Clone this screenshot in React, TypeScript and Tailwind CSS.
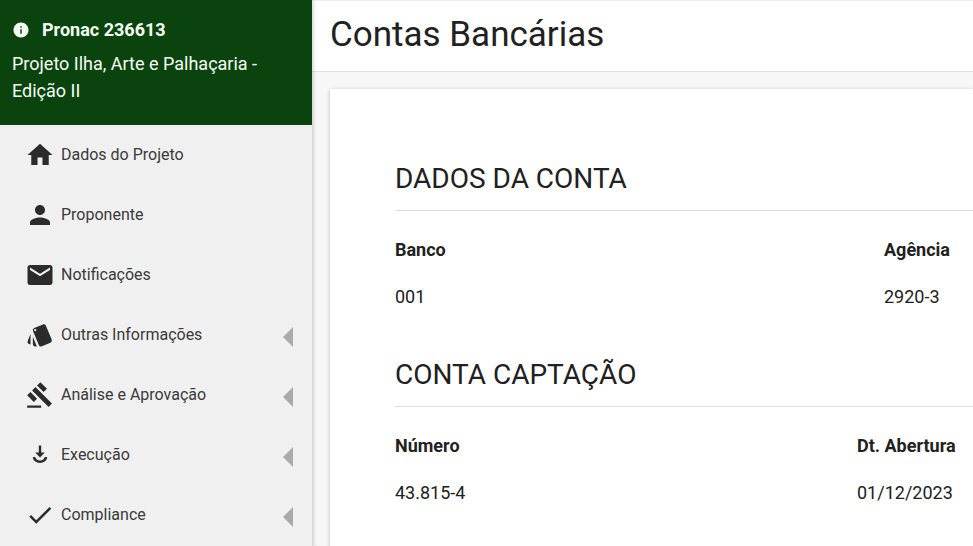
import type { ReactNode } from 'react';
import { MdCheck, MdEmail, MdGavel, MdHome, MdInfo, MdPerson, MdStyle } from 'react-icons/md';

const ExecutionIcon = () => (
  <svg viewBox="0 0 30 30" className="h-[30px] w-[30px]" fill="none" aria-hidden="true">
    <path d="M15 5.5V14" stroke="currentColor" strokeWidth="2.4" />
    <path d="M10.3 12.4h9.4L15 17.6z" fill="currentColor" />
    <path d="M8.8 17.2a6.5 6.5 0 0 0 12.4 0" stroke="currentColor" strokeWidth="2.6" />
  </svg>
);

const Arrow = () => (
  <svg viewBox="0 0 10 20" className="mt-1 h-5 w-[10px] text-[#aaaaaa]" aria-hidden="true">
    <path d="M10 0v20L0 10z" fill="currentColor" />
  </svg>
);

type MenuItem = { label: string; icon: ReactNode; expandable?: boolean };

const menuItems: MenuItem[] = [
  { label: 'Dados do Projeto', icon: <MdHome size={30} /> },
  { label: 'Proponente', icon: <MdPerson size={30} /> },
  { label: 'Notificações', icon: <MdEmail size={30} /> },
  { label: 'Outras Informações', icon: <MdStyle size={28} />, expandable: true },
  { label: 'Análise e Aprovação', icon: <MdGavel size={28} />, expandable: true },
  { label: 'Execução', icon: <ExecutionIcon />, expandable: true },
  { label: 'Compliance', icon: <MdCheck size={30} />, expandable: true },
];

const rowClass = 'flex h-[60px] w-full items-center pl-[25px] pr-[19px] text-left text-[#2b2b2b]';

const ItemContent = ({ item }: { item: MenuItem }) => (
  <>
    <span className="flex w-[30px] justify-center">{item.icon}</span>
    <span className="grow pl-[6px] text-base text-[#3a3a3a]">{item.label}</span>
    {item.expandable && <Arrow />}
  </>
);

const Sidebar = () => (
  <aside className="z-10 w-[312px] shrink-0 bg-[#f0f0f0] shadow-[0_0_5px_rgba(0,0,0,0.3)]">
    <div className="h-[125px] bg-[#0b430f] px-3 pt-4 text-lg leading-[27px] text-[#f3fff3]">
      <div className="flex items-center pb-[7px]">
        <MdInfo size={18} />
        <strong className="pl-3 font-bold">Pronac 236613</strong>
      </div>
      <p>Projeto Ilha, Arte e Palhaçaria - Edição II</p>
    </div>
    <nav>
      <ul>
        {menuItems.map((item) => (
          <li key={item.label}>
            {item.expandable ? (
              <button type="button" className={rowClass}>
                <ItemContent item={item} />
              </button>
            ) : (
              <a href="#" className={rowClass}>
                <ItemContent item={item} />
              </a>
            )}
          </li>
        ))}
      </ul>
    </nav>
  </aside>
);

type AccountProps = {
  title: string;
  columns: [string, string];
  values: [string, string];
  lastColumn: string;
};

const Account = ({ title, columns, values, lastColumn }: AccountProps) => (
  <section className="h-[196px]">
    <h2 className="border-b border-[#e0e0e0] pb-[11px] text-[28px] leading-[40px]">{title}</h2>
    <table className="mt-[15px] w-full table-fixed text-left text-lg leading-[27px]">
      <thead>
        <tr className="h-[47px]">
          <th className="font-bold">{columns[0]}</th>
          <th className={lastColumn}>{columns[1]}</th>
        </tr>
      </thead>
      <tbody>
        <tr className="h-[47px]">
          <td>{values[0]}</td>
          <td>{values[1]}</td>
        </tr>
      </tbody>
    </table>
  </section>
);

const App = () => {
  return (
    <div className="flex min-h-screen bg-[#f7f7f7] font-['Roboto',sans-serif] text-[#212121]">
      <Sidebar />
      <main className="flex min-w-0 grow flex-col">
        <header className="border-b border-t border-b-[#e0e0e0] border-t-[#eeeeee] bg-white px-[18px] pb-[14px] pt-3">
          <h1 className="text-[35px] leading-[44px]">Contas Bancárias</h1>
        </header>
        <div className="ml-[18px] mt-[17px] grow bg-white pl-[65px] pt-[70px] shadow-[0_1px_4px_rgba(0,0,0,0.25)]">
          <Account
            title="DADOS DA CONTA"
            columns={['Banco', 'Agência']}
            values={['001', '2920-3']}
            lastColumn="w-[89px] font-bold"
          />
          <Account
            title="CONTA CAPTAÇÃO"
            columns={['Número', 'Dt. Abertura']}
            values={['43.815-4', '01/12/2023']}
            lastColumn="w-[116px] font-bold"
          />
        </div>
      </main>
    </div>
  );
};

export default App;
